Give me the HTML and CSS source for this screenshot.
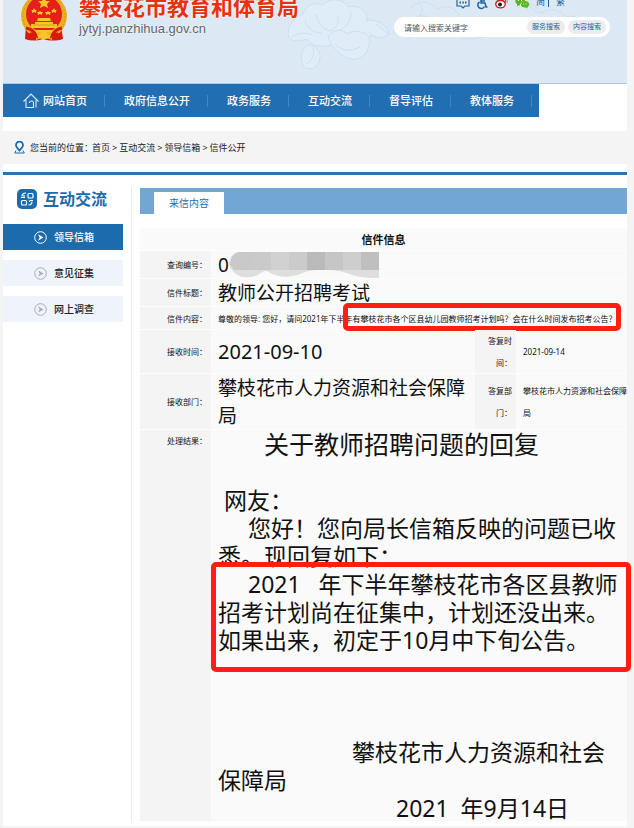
FILE: index.html
```html
<!DOCTYPE html>
<html lang="zh-CN">

<head>
    <meta charset="UTF-8">
    <meta name="viewport" content="width=device-width, initial-scale=1.0">
    <title>信件公开 - 攀枝花市教育和体育局</title>
    <link rel="stylesheet" href="styles.css">
</head>

<body>
    <div class="page">
        <header class="header">
            <!-- Flower line drawing behind the header -->
            <svg class="header-art" viewBox="0 0 350 84" fill="none" stroke="#cddff0" stroke-width="1" aria-hidden="true">
                <g fill="#e0edf8">
                    <path d="M12 38c-3-9 2-19 14-24 2-8 12-13 20-9 7-8 21-6 25 2 11-3 20 4 19 14 8 5 7 16-3 19-6 8-20 8-27 2-12 7-25 5-30-3-8 3-16 2-18-1z" />
                    <path d="M51 36c5-6 14-8 19-2 8-5 18-2 22 3 2 10-3 20-13 22-10 2-24-9-28-23z" />
                    <path d="M31 45c8 1 13 6 12 14-1 7-8 12-15 9-6-6-5-18 3-23z" />
                    <path d="M91 20c11 0 19 5 21 14-7 6-16 4-20-2" />
                </g>
                <path d="M39 14c2 9 6 15 14 17 6-2 9-8 8-15M28 20c2 8 8 13 17 13M74 12c0 9-4 15-13 19M58 44c7 7 15 8 25 3M36 48c2 6-1 12-6 16M15 37c6-4 13-5 20-2M99 24c4 3 8 6 12 10" />
                <path d="M132 9c8-9 20-9 28 0 9-5 18-1 22 6M128 26c10-13 25-13 32-3M142 3c5 6 3 12-3 16M240 4c12-4 20 2 24 9 9-6 20-3 25 4 9-3 14 2 16 6M251 1c3 9 9 13 17 12M184 38c10 2 18 1 27-3" />
            </svg>
            <div class="brand">
                <svg class="emblem" viewBox="0 0 48 48" aria-hidden="true">
                    <path d="M6 32l-1 14c6 2 12 2 18 0 7 2 13 2 20 0l-2-14z" fill="#d8190f" />
                    <circle cx="24" cy="23" r="23" fill="#edb01f" />
                    <circle cx="24" cy="23" r="21" fill="none" stroke="#d9951a" stroke-width="1" stroke-dasharray="2 2" />
                    <circle cx="24" cy="21" r="18" fill="#e5201a" />
                    <g fill="#f7c52b">
                        <path d="M24 4l2 4h4l-3 3 1 4-4-2-4 2 1-4-3-3h4z" />
                        <path d="M14 15l1 2h2l-1 1v2l-2-1-2 1v-2l-1-1h2zM34 15l1 2h2l-1 1v2l-2-1-2 1v-2l-1-1h2zM20 18l1 1h2l-1 2v1l-2-1-2 1v-1l-1-2h2zM28 18l1 1h2l-1 2v1l-2-1-2 1v-1l-1-2h2z" />
                        <path d="M18 25h12l1 3H17zM15 29h18v2h4v4H11v-4h4z" />
                        <path d="M13 37h22l-2 3-5-1-4 3-4-3-5 1z" />
                        <path d="M16 47c0-5 4-7 8-7s8 2 8 7l-5-2-3 2-3-2z" />
                    </g>
                    <path d="M6 35c5 1 9 4 10 8l-5-2-4 5M42 35c-5 1-9 4-10 8l5-2 4 5" fill="none" stroke="#d8190f" stroke-width="3" />
                    <path d="M13 32h22" stroke="#e09a1c" stroke-width="1" />
                </svg>
                <div class="brand-text">
                    <h1>攀枝花市教育和体育局</h1>
                    <p>jytyj.panzhihua.gov.cn</p>
                </div>
            </div>
            <div class="header-side">
                <div class="tools">
                    <a href="#" aria-label="留言">
                        <svg width="14" height="16" viewBox="0 0 14 16" fill="none" stroke="#1f639f" stroke-width="1.200">
                            <path d="M1 1h12v11H9l-2 2-2-2H1z" />
                            <path d="M3.500 8.500h1.500M6.300 8.500h1.500M9 8.500h1.500" stroke-width="1.800" />
                        </svg>
                    </a>
                    <a href="#" aria-label="无障碍">
                        <svg width="11" height="16" viewBox="0 0 11 16" fill="none" stroke="#1f639f" stroke-width="1.500">
                            <circle cx="4" cy="3" r="1" fill="#1f639f" />
                            <path d="M4 4v5h4l1 4h1.500M4 7h4" />
                            <path d="M2.500 8a3.500 3.500 0 1 0 5 4.500" />
                        </svg>
                    </a>
                    <a href="#" aria-label="微博">
                        <svg width="13" height="16" viewBox="0 0 13 16">
                            <ellipse cx="5.500" cy="10" rx="5.500" ry="4.500" fill="#d3202a" />
                            <ellipse cx="5.500" cy="10.300" rx="4" ry="3" fill="#fff" />
                            <circle cx="5" cy="10.500" r="2" fill="#222" />
                            <path d="M8 6c2-1 3 0 2.500 2" fill="none" stroke="#d3202a" />
                            <path d="M8 4c3-.5 5 1 4 5" fill="none" stroke="#f0951f" stroke-width="1.300" />
                        </svg>
                    </a>
                    <a href="#" aria-label="微信">
                        <svg width="14" height="16" viewBox="0 0 14 16" fill="#55b81e">
                            <path d="M5 3c3 0 5 2 5 4-3 0-5 2-5 4l-3 1V10C-1 8 0 3 5 3z" />
                            <path d="M10 7c5 0 5 5 2.500 6v1.500L11 13.500C4 14 5 7 10 7z" />
                            <path d="M8.500 9.500v1M11 9.500v1M3.500 6v1M6.500 6v1" stroke="#fff" />
                        </svg>
                    </a>
                    <a class="lang" href="#">简</a>
                    <span class="lang-line"></span>
                    <a class="lang" href="#">繁</a>
                </div>
                <form class="search">
                    <input type="text" aria-label="搜索关键字" placeholder="请输入搜索关键字">
                    <button type="button">服务搜索</button>
                    <button type="button">内容搜索</button>
                </form>
            </div>
        </header>

        <nav class="nav">
            <a href="#">
                <svg width="16" height="16" viewBox="0 0 16 16" fill="none" stroke="#d9ebfa" stroke-width="1.100">
                    <path d="M.5 8.500L8 1l7.500 7.500" />
                    <path d="M3 7v7.500h7.500V10a2 2 0 0 0-4 0M13 7v7.500" />
                </svg>网站首页</a>
            <a href="#">政府信息公开</a>
            <a href="#">政务服务</a>
            <a href="#">互动交流</a>
            <a href="#">督导评估</a>
            <a href="#">教体服务</a>
        </nav>

        <div class="breadcrumb">
            <svg width="11" height="13" viewBox="0 0 11 13" fill="none" stroke="#1c6cad">
                <path d="M5.500 9.500C3 7 2 5.500 2 4a3.500 3.500 0 0 1 7 0c0 1.500-1 3-3.500 5.500z" stroke-width="1.800" />
                <path d="M2 9.500L.7 12h9.600L9 9.500" />
            </svg>
            <span>您当前的位置：</span>
            <a href="#">首页</a> &gt; <a href="#">互动交流</a> &gt; <a href="#">领导信箱</a> &gt; <a href="#">信件公开</a>
        </div>

        <main class="main">
            <aside class="sidebar">
                <h2>
                    <svg width="20" height="20" viewBox="0 0 20 20" fill="none" stroke="#fff" stroke-width="1.200">
                        <rect width="20" height="20" rx="5" fill="#1c6cad" stroke="none" />
                        <rect x="11" y="4.500" width="5" height="4.500" rx="1" />
                        <rect x="4.500" y="11.500" width="5" height="4.500" rx="1" />
                        <path d="M9 4C6 4 5 6 5 7.500M4 8.500h4M7 6v3M16 11.500h-3M15 12.500c0 2-1 3.500-3.500 3.500M12.500 13v-1.500" />
                    </svg>互动交流</h2>
                <ul>
                    <li><a class="active" href="#">
                            <svg width="13" height="13" viewBox="0 0 13 13">
                                <circle cx="6.500" cy="6.500" r="5.800" fill="none" stroke="currentColor" />
                                <path d="M4 3.300l5.500 3.200L4 9.700l1.700-3.200z" fill="currentColor" />
                            </svg><span>领导信箱</span></a></li>
                    <li><a href="#">
                            <svg width="13" height="13" viewBox="0 0 13 13">
                                <circle cx="6.500" cy="6.500" r="5.800" fill="none" stroke="currentColor" />
                                <path d="M4 3.300l5.500 3.200L4 9.700l1.700-3.200z" fill="currentColor" />
                            </svg><span>意见征集</span></a></li>
                    <li><a href="#">
                            <svg width="13" height="13" viewBox="0 0 13 13">
                                <circle cx="6.500" cy="6.500" r="5.800" fill="none" stroke="currentColor" />
                                <path d="M4 3.300l5.500 3.200L4 9.700l1.700-3.200z" fill="currentColor" />
                            </svg><span>网上调查</span></a></li>
                </ul>
            </aside>

            <section class="content">
                <div class="tabs"><a href="#">来信内容</a></div>
                <table class="letter">
                    <colgroup>
                        <col class="col-label">
                        <col>
                        <col class="col-sublabel">
                        <col class="col-side">
                    </colgroup>
                    <tr class="row-head">
                        <th colspan="4">信件信息</th>
                    </tr>
                    <tr class="row-line">
                        <th>查询编号：</th>
                        <td class="large" colspan="3">
                            <div class="number">0<svg width="150" height="26" viewBox="0 0 150 26" aria-hidden="true">
                                    <path d="M0 12C1 4 5 0 11 0h139v26c-14 0-24-1-32-5-14-4-30-4-42-1-12 6-24 6-35 1-4-4-8-1-12 2-12 5-25 2-29-11z" fill="#dedede" />
                                    <path d="M1 13C2 4 6 0 11 0h13v18H5z" fill="#c9c9c9" />
                                    <path d="M24 0h18v18H24z" fill="#cacaca" />
                                    <path d="M42 0h18v18H42z" fill="#d1d1d1" />
                                    <path d="M60 0h18v18H60z" fill="#cbcbcb" />
                                    <path d="M78 0h18v18H78z" fill="#bababa" />
                                    <path d="M96 0h18v18H96z" fill="#c6c6c6" />
                                    <path d="M114 0h18v18h-18z" fill="#cecece" />
                                    <path d="M132 0h18v18h-18z" fill="#bfbfbf" />
                                </svg></div>
                        </td>
                    </tr>
                    <tr class="row-line">
                        <th>信件标题：</th>
                        <td class="large" colspan="3">教师公开招聘考试</td>
                    </tr>
                    <tr class="row-question">
                        <th>信件内容：</th>
                        <td colspan="3">尊敬的领导: 您好，请问2021年下半年有攀枝花市各个区县幼儿园教师招考计划吗？会在什么时间发布招考公告？<div class="mark mark-question"></div></td>
                    </tr>
                    <tr>
                        <th>接收时间：</th>
                        <td class="large date">2021-09-10</td>
                        <th>答复时间：</th>
                        <td>2021-09-14</td>
                    </tr>
                    <tr>
                        <th>接收部门：</th>
                        <td class="large">攀枝花市人力资源和社会保障局</td>
                        <th>答复部门：</th>
                        <td class="side">攀枝花市人力资源和社会保障局</td>
                    </tr>
                    <tr class="row-reply">
                        <th>处理结果：</th>
                        <td class="reply" colspan="3">
                            <h3>关于教师招聘问题的回复</h3>
                            <p class="greet">网友：</p>
                            <p class="para">您好！您向局长信箱反映的问题已收悉。现回复如下：</p>
                            <p class="para">2021 &nbsp; 年下半年攀枝花市各区县教师招考计划尚在征集中，计划还没出来。如果出来，初定于10月中下旬公告。</p>
                            <p class="sign">攀枝花市人力资源和社会保障局</p>
                            <p class="sign-date">2021 &nbsp;年9月14日</p>
                            <div class="mark mark-reply"></div>
                        </td>
                    </tr>
                </table>
            </section>
        </main>
    </div>
</body>

</html>
```
FILE: styles.css
```css
* {
    box-sizing: border-box;
}

body {
    margin: 0;
    background: #f4f4f4;
    color: #111;
    font-family: "Noto Sans", "Noto Sans CJK SC", sans-serif;
    font-size: 8px;
}

h1,
h2,
h3,
p,
ul {
    margin: 0;
    padding: 0;
}

a {
    color: inherit;
    text-decoration: none;
}

svg {
    flex: none;
}

.page {
    margin: 0 7px 0 3px;
    padding-bottom: 4px;
    background: #fff;
}

/* Header */
.header {
    position: relative;
    display: flex;
    justify-content: space-between;
    align-items: flex-start;
    height: 84px;
    overflow: hidden;
    background: #dce9f4;
    border-bottom: 1px solid #a9cbe8;
}

.header-art {
    position: absolute;
    top: 0;
    right: 0;
    width: 350px;
    height: 84px;
}

.brand {
    position: relative;
    display: flex;
    gap: 11px;
    margin-top: -7px;
    padding-left: 17px;
}

.emblem {
    width: 48px;
    height: 48px;
}

.brand h1 {
    margin-bottom: 3px;
    color: #e6330f;
    font-size: 22px;
    line-height: 26px;
    text-shadow: 0 0 2px #fff, 0 0 2px #fff;
}

.brand p {
    color: #666;
    font-family: "Liberation Sans", sans-serif;
    font-size: 13px;
    line-height: 14px;
    text-shadow: 0 0 2px #fff;
}

.header-side {
    position: relative;
    margin: -6px 17px 0 0;
}

.tools {
    display: flex;
    align-items: center;
    gap: 7px;
    height: 16px;
    margin-left: 62px;
}

.tools a {
    display: block;
    height: 16px;
}

.tools .lang {
    color: #1f639f;
    font-size: 9px;
    line-height: 16px;
}

.lang-line {
    width: 1px;
    height: 10px;
    margin-left: -4px;
    background: #1f639f;
}

.search {
    display: flex;
    align-items: center;
    gap: 3px;
    width: 216px;
    height: 20px;
    margin-top: 7px;
    padding: 0 4px 0 10px;
    border-radius: 10px;
    background: #fff;
}

.search input {
    flex: 1;
    min-width: 0;
    padding: 0;
    border: none;
    outline: none;
    background: none;
    font-family: inherit;
    font-size: 8px;
}

.search input::placeholder {
    color: #555;
}

.search button {
    width: 38px;
    height: 14px;
    padding: 0;
    border: none;
    border-radius: 7px;
    background: #ececee;
    color: #1f639f;
    font-family: inherit;
    font-size: 7px;
    line-height: 14px;
    cursor: pointer;
}

/* Navigation */
.nav {
    display: flex;
    width: fit-content;
    padding: 0 7px 0 1px;
    background: #226eb3;
}

.nav a {
    display: flex;
    align-items: center;
    position: relative;
    height: 33px;
    padding: 0 18px 0 19px;
    color: #fff;
    font-size: 11px;
    font-weight: 500;
    line-height: 32px;
}

.nav a::after {
    content: "";
    position: absolute;
    right: 0;
    width: 1px;
    height: 12px;
    background: #4287c4;
}

.nav svg {
    margin-right: 4px;
}

/* Current position */
.breadcrumb {
    display: flex;
    align-items: center;
    gap: 2px;
    height: 33px;
    margin: 14px 0 8px;
    padding-left: 11px;
    background: #f4f4f4;
    color: #222;
    font-size: 9px;
    line-height: 16px;
}

.breadcrumb svg {
    margin-right: 3px;
}

.breadcrumb span {
    margin-right: -3px;
}

.main {
    display: flex;
    gap: 8px;
    padding-top: 12px;
    border-top: 3px solid #2a73b6;
}

/* Sidebar */
.sidebar {
    width: 129px;
    flex: none;
    padding-right: 8px;
    border-right: 1px solid #e6e9ee;
}

.sidebar h2 {
    display: flex;
    align-items: center;
    gap: 6px;
    height: 24px;
    padding-left: 14px;
    color: #1c6cad;
    font-size: 16px;
    line-height: 24px;
}

.sidebar ul {
    display: flex;
    flex-direction: column;
    gap: 10px;
    margin-top: 13px;
    list-style: none;
}

.sidebar li a {
    display: flex;
    align-items: center;
    gap: 7px;
    height: 26px;
    padding-left: 31px;
    background: #eff3fa;
    color: #a9adb3;
    font-size: 10px;
    font-weight: 500;
    line-height: 26px;
}

.sidebar li span {
    color: #222;
}

.sidebar li .active,
.sidebar li .active span {
    background: #1c6cad;
    color: #fff;
}

/* Letter */
.content {
    flex: 1;
    min-width: 0;
}

.tabs {
    display: flex;
    margin-top: 1px;
    padding: 4px 0 0 14px;
    background: #72a6d5;
}

.tabs a {
    padding: 0 15px;
    background: #fff;
    color: #1f6bb0;
    font-size: 10px;
    line-height: 22px;
}

.letter {
    width: 100%;
    margin-top: 14px;
    border-collapse: collapse;
    table-layout: fixed;
    background: #fafafa;
}

.col-label {
    width: 71px;
}

.col-sublabel {
    width: 41px;
}

.col-side {
    width: 111px;
}

.letter th,
.letter td {
    position: relative;
    padding: 0 4px 0 7px;
    box-shadow: inset 0 -1px #fdfdfd;
    font-weight: normal;
    line-height: 22px;
    text-align: left;
}

.letter th {
    padding: 0 4px;
    background: #f4f4f4;
    text-align: right;
}

.letter .row-head th {
    background: #fafafa;
    font-size: 11px;
    font-weight: bold;
    text-align: center;
}

.letter .large {
    font-size: 19px;
    line-height: 28px;
}

.letter .date {
    font-size: 20px;
}

.letter .side {
    padding-right: 0;
}

.row-question td {
    white-space: nowrap;
}

.row-question,
.row-head {
    height: 23px;
}

.row-line {
    height: 28px;
}

.number {
    display: flex;
    align-items: center;
}

.row-reply th {
    vertical-align: top;
}

.letter .reply {
    font-size: 23px;
    line-height: 28px;
}

.reply h3 {
    margin-bottom: 28px;
    font-size: 25px;
    font-weight: normal;
    text-indent: 46px;
}

.reply .greet {
    text-indent: 6px;
}

.reply .para {
    text-indent: 30px;
}

.reply .sign {
    margin-top: 84px;
    text-indent: 134px;
}

.reply .sign-date {
    text-indent: 178px;
}

/* Red frames round the key sentences */
.mark {
    position: absolute;
    border: 5px solid #ff1f12;
    border-radius: 5px;
}

.mark-question {
    top: -4px;
    left: 132px;
    right: 6px;
    height: 28px;
}

.mark-reply {
    top: 132px;
    left: 0;
    right: -4px;
    height: 110px;
}
```
